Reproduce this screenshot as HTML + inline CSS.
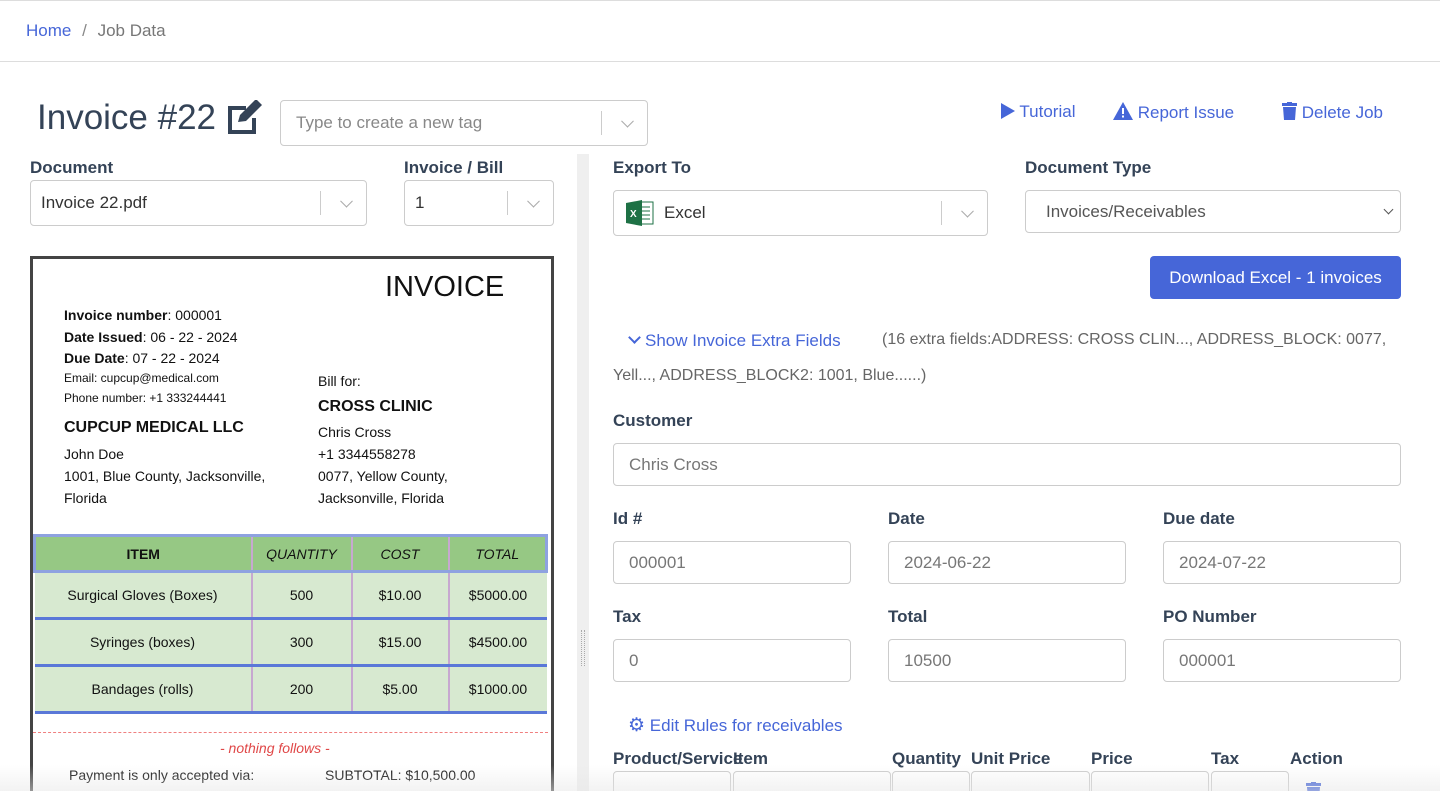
<!DOCTYPE html>
<html style="width:1440px;height:791px;overflow:hidden"><head><meta charset="utf-8"><style>
*{box-sizing:border-box;margin:0;padding:0}
body{width:1440px;height:791px;overflow:hidden;background:#fff;font-family:"Liberation Sans",sans-serif;color:#344357;position:relative}
.a{position:absolute}
.lbl{font-weight:bold;font-size:17px;color:#344357}
.inp{position:absolute;border:1px solid #ccc;border-radius:4px;background:#fff;font-size:17px;color:#777;padding-left:15px;display:flex;align-items:center}
.sel .sep{position:absolute;right:45px;top:10px;bottom:10px;border-left:1px solid #ccc}
.sel .chev{position:absolute;right:15px;top:50%;width:9px;height:9px;border-right:1.5px solid #aaa;border-bottom:1.5px solid #aaa;transform:translateY(-70%) rotate(45deg)}
.blue{color:#4666d8}
.doc{font-size:14px;color:#111}
table{border-collapse:collapse}
td{text-align:center;font-size:14px;color:#111}
</style></head><body>
<div class="a" style="top:0;left:0;width:1440px;height:1px;background:#ddd"></div>
<div class="a" style="top:21px;left:26px;font-size:17px"><span class="blue">Home</span> <span style="color:#888;margin:0 6px">/</span> <span style="color:#777">Job Data</span></div>
<div class="a" style="top:61px;left:0;width:1440px;height:1px;background:#ddd"></div>

<div class="a" style="top:98px;left:37px;font-size:35px;color:#344357">Invoice #22</div>
<svg class="a" style="left:224px;top:100px" width="42" height="36" viewBox="0 0 42 36"><path d="M4 6h18v4H8v20h20V18h4v16H4z" fill="#344357"/><path d="M14 22l2-7 16-16 6 6-16 16z" fill="#344357"/></svg>
<div class="inp sel" style="left:280px;top:100px;width:368px;height:46px;color:#888">Type to create a new tag<span class="sep"></span><span class="chev"></span></div>

<div class="a blue" style="top:102px;left:1001px;font-size:17px">
<span style="display:inline-block;width:0;height:0;border-left:14px solid #4666d8;border-top:8px solid transparent;border-bottom:8px solid transparent;vertical-align:-2px"></span> Tutorial</div>
<div class="a blue" style="top:102px;left:1113px;font-size:17px"><svg width="20" height="18" viewBox="0 0 20 18" style="vertical-align:-2px"><path d="M10 0L20 18H0z" fill="#4666d8"/><rect x="9" y="6" width="2" height="6" fill="#fff"/><rect x="9" y="13.5" width="2" height="2" fill="#fff"/></svg> Report Issue</div>
<div class="a blue" style="top:102px;left:1282px;font-size:17px"><svg width="15" height="18" viewBox="0 0 15 18" style="vertical-align:-2px"><rect x="0" y="1" width="15" height="3" fill="#4666d8"/><rect x="5" y="0" width="5" height="2" fill="#4666d8"/><path d="M1 5h13l-1 13H2z" fill="#4666d8"/></svg> Delete Job</div>

<div class="a lbl" style="left:30px;top:158px">Document</div>
<div class="inp sel" style="left:30px;top:180px;width:337px;height:46px;color:#333;padding-left:10px">Invoice 22.pdf<span class="sep"></span><span class="chev"></span></div>
<div class="a lbl" style="left:404px;top:158px">Invoice / Bill</div>
<div class="inp sel" style="left:404px;top:180px;width:150px;height:46px;color:#333;padding-left:10px">1<span class="sep"></span><span class="chev"></span></div>

<div class="a" style="left:577px;top:154px;width:12px;height:637px;background:#efefef"></div>
<div class="a" style="left:581px;top:630px;width:4px;height:36px;border-left:1px dotted #aaa;border-right:1px dotted #aaa"></div>

<div class="a doc" style="left:30px;top:256px;width:524px;height:580px;border:3px solid #444;background:#fff">
<div class="a" style="left:352px;top:12px;font-size:29px">INVOICE</div>
<div class="a" style="left:31px;top:46px;line-height:21.5px"><b>Invoice number</b>: 000001<br><b>Date Issued</b>: 06 - 22 - 2024<br><b>Due Date</b>: 07 - 22 - 2024</div>
<div class="a" style="left:31px;top:109px;font-size:12px;line-height:20px">Email: cupcup@medical.com<br>Phone number: +1 333244441</div>
<div class="a" style="left:31px;top:160px;font-size:16px;font-weight:bold">CUPCUP MEDICAL LLC</div>
<div class="a" style="left:31px;top:184px;line-height:22px">John Doe<br>1001, Blue County, Jacksonville,<br>Florida</div>
<div class="a" style="left:285px;top:114px">Bill for:</div>
<div class="a" style="left:285px;top:139px;font-size:16px;font-weight:bold">CROSS CLINIC</div>
<div class="a" style="left:285px;top:162px;line-height:22px">Chris Cross<br>+1 3344558278<br>0077, Yellow County,<br>Jacksonville, Florida</div>
<table class="a" style="left:0;top:275px;width:515px">
<tr style="background:#96c884;height:36px;border:3px solid #8ea2e0"><td style="width:217px;font-weight:bold;border-right:2px solid #c7a8d0">ITEM</td><td style="width:100px;font-style:italic;border-right:2px solid #c7a8d0">QUANTITY</td><td style="width:97px;font-style:italic;border-right:2px solid #c7a8d0">COST</td><td style="font-style:italic">TOTAL</td></tr>
<tr style="background:#d7e9d0;height:47px;border-bottom:3px solid #5a78d8"><td style="border-right:2px solid #c7a8d0">Surgical Gloves (Boxes)</td><td style="border-right:2px solid #c7a8d0">500</td><td style="border-right:2px solid #c7a8d0">$10.00</td><td>$5000.00</td></tr>
<tr style="background:#d7e9d0;height:47px;border-bottom:3px solid #5a78d8"><td style="border-right:2px solid #c7a8d0">Syringes (boxes)</td><td style="border-right:2px solid #c7a8d0">300</td><td style="border-right:2px solid #c7a8d0">$15.00</td><td>$4500.00</td></tr>
<tr style="background:#d7e9d0;height:47px;border-bottom:3px solid #5a78d8"><td style="border-right:2px solid #c7a8d0">Bandages (rolls)</td><td style="border-right:2px solid #c7a8d0">200</td><td style="border-right:2px solid #c7a8d0">$5.00</td><td>$1000.00</td></tr>
</table>
<div class="a" style="left:0;top:473px;width:515px;border-top:1px dashed #f08080"></div>
<div class="a" style="left:187px;top:481px;color:#e04848;font-style:italic">- nothing follows -</div>
<div class="a" style="left:36px;top:508px">Payment is only accepted via:</div>
<div class="a" style="left:292px;top:508px">SUBTOTAL: $10,500.00</div>
</div>

<div class="a lbl" style="left:613px;top:158px">Export To</div>
<div class="inp sel" style="left:613px;top:190px;width:375px;height:46px;color:#333;padding-left:12px">
<svg width="28" height="26" viewBox="0 0 28 26" style="margin-right:10px"><rect x="10" y="2" width="17" height="22" fill="#fff" stroke="#1e7145"/><path d="M13 7h11M13 11h11M13 15h11M13 19h11" stroke="#1e7145"/><path d="M0 3l16-3v26L0 23z" fill="#1e7145"/><text x="4" y="17" font-size="10" font-weight="bold" fill="#fff" font-family="Liberation Sans">X</text></svg>Excel<span class="sep"></span><span class="chev"></span></div>
<div class="a lbl" style="left:1025px;top:158px">Document Type</div>
<div class="inp" style="left:1025px;top:190px;width:376px;height:43px;padding-left:20px;color:#555">Invoices/Receivables<span style="position:absolute;right:8px;top:15px;width:7px;height:7px;border-right:1.5px solid #555;border-bottom:1.5px solid #555;transform:rotate(45deg)"></span></div>
<div class="a" style="left:1150px;top:256px;width:251px;height:43px;background:#4666d8;border-radius:4px;color:#fff;font-size:17px;display:flex;align-items:center;justify-content:center">Download Excel - 1 invoices</div>

<div class="a blue" style="left:628px;top:331px;font-size:17px"><span style="display:inline-block;width:9px;height:9px;border-right:2.5px solid #4666d8;border-bottom:2.5px solid #4666d8;transform:rotate(45deg);margin:0 6px 4px 2px"></span>Show Invoice Extra Fields</div>
<div class="a" style="left:882px;top:331px;font-size:16px;color:#666">(16 extra fields:ADDRESS: CROSS CLIN..., ADDRESS_BLOCK: 0077,</div>
<div class="a" style="left:613px;top:367px;font-size:16px;color:#666">Yell..., ADDRESS_BLOCK2: 1001, Blue......)</div>

<div class="a lbl" style="left:613px;top:411px">Customer</div>
<div class="inp" style="left:613px;top:443px;width:788px;height:43px">Chris Cross</div>

<div class="a lbl" style="left:613px;top:509px">Id #</div>
<div class="inp" style="left:613px;top:541px;width:238px;height:43px">000001</div>
<div class="a lbl" style="left:888px;top:509px">Date</div>
<div class="inp" style="left:888px;top:541px;width:238px;height:43px">2024-06-22</div>
<div class="a lbl" style="left:1163px;top:509px">Due date</div>
<div class="inp" style="left:1163px;top:541px;width:238px;height:43px">2024-07-22</div>

<div class="a lbl" style="left:613px;top:607px">Tax</div>
<div class="inp" style="left:613px;top:639px;width:238px;height:43px">0</div>
<div class="a lbl" style="left:888px;top:607px">Total</div>
<div class="inp" style="left:888px;top:639px;width:238px;height:43px">10500</div>
<div class="a lbl" style="left:1163px;top:607px">PO Number</div>
<div class="inp" style="left:1163px;top:639px;width:238px;height:43px">000001</div>

<div class="a blue" style="left:628px;top:714px;font-size:17px"><span style="font-size:19px">⚙</span> Edit Rules for receivables</div>
<div class="a lbl" style="left:613px;top:749px">Product/Service</div>
<div class="a lbl" style="left:733px;top:749px">Item</div>
<div class="a lbl" style="left:892px;top:749px">Quantity</div>
<div class="a lbl" style="left:971px;top:749px">Unit Price</div>
<div class="a lbl" style="left:1091px;top:749px">Price</div>
<div class="a lbl" style="left:1211px;top:749px">Tax</div>
<div class="a lbl" style="left:1290px;top:749px">Action</div>
<div class="inp" style="left:613px;top:771px;width:118px;height:43px"></div>
<div class="inp" style="left:733px;top:771px;width:158px;height:43px;padding-top:14px">Surgical Gloves</div>
<div class="inp" style="left:892px;top:771px;width:78px;height:43px;padding-top:14px">500</div>
<div class="inp" style="left:971px;top:771px;width:119px;height:43px;padding-top:14px">10</div>
<div class="inp" style="left:1091px;top:771px;width:118px;height:43px;padding-top:14px">5000</div>
<div class="inp" style="left:1211px;top:771px;width:78px;height:43px"></div>
<svg class="a" style="left:1306px;top:782px" width="15" height="18" viewBox="0 0 15 18"><rect x="0" y="1" width="15" height="3" fill="#4666d8"/><rect x="5" y="0" width="5" height="2" fill="#4666d8"/><path d="M1 5h13l-1 13H2z" fill="#4666d8"/></svg>
<div class="a" style="left:0;top:765px;width:1440px;height:26px;background:linear-gradient(rgba(255,255,255,0),rgba(230,230,230,0.5))"></div>
</body></html>
